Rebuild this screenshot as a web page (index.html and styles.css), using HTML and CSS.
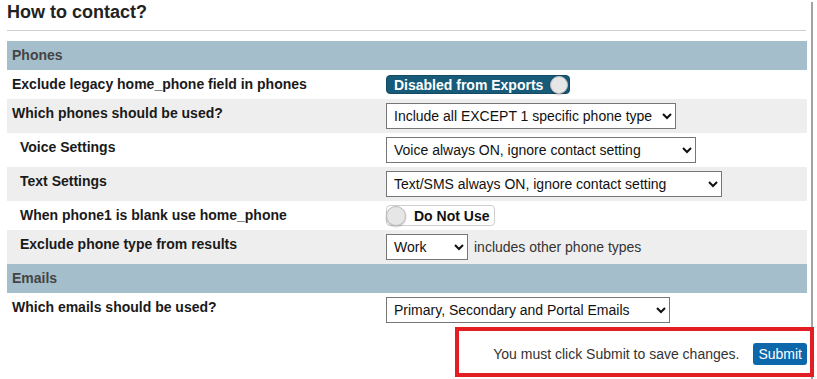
FILE: index.html
```html
<!DOCTYPE html>
<html lang="en">
<head>
  <meta charset="UTF-8" />
  <title>How to contact?</title>
  <link rel="stylesheet" href="styles.css">
</head>
<body>
  <div class="page">
    <h2 class="title">How to contact?</h2>
    <hr class="rule">

    <div class="section-head">Phones</div>
    <div class="row short">
      <div class="label">Exclude legacy home_phone field in phones</div>
      <div class="control">
        <span class="switch on">Disabled from Exports<span class="knob"></span></span>
      </div>
    </div>
    <div class="row alt">
      <div class="label">Which phones should be used?</div>
      <div class="control">
        <select class="w-phones">
          <option>Include all EXCEPT 1 specific phone type</option>
        </select>
      </div>
    </div>
    <div class="row">
      <div class="label sub">Voice Settings</div>
      <div class="control">
        <select class="w-voice">
          <option>Voice always ON, ignore contact setting</option>
        </select>
      </div>
    </div>
    <div class="row alt">
      <div class="label sub">Text Settings</div>
      <div class="control">
        <select class="w-text">
          <option>Text/SMS always ON, ignore contact setting</option>
        </select>
      </div>
    </div>
    <div class="row short">
      <div class="label sub">When phone1 is blank use home_phone</div>
      <div class="control">
        <span class="switch off"><span class="knob"></span>Do Not Use</span>
      </div>
    </div>
    <div class="row alt">
      <div class="label sub">Exclude phone type from results</div>
      <div class="control">
        <select class="w-type">
          <option>Work</option>
        </select>
        <span class="hint">includes other phone types</span>
      </div>
    </div>

    <div class="section-head">Emails</div>
    <div class="row">
      <div class="label">Which emails should be used?</div>
      <div class="control">
        <select class="w-emails">
          <option>Primary, Secondary and Portal Emails</option>
        </select>
      </div>
    </div>

    <div class="footer">
      <div class="notice">
        <span>You must click Submit to save changes.</span>
        <button class="submit">Submit</button>
      </div>
    </div>
  </div>
</body>
</html>
```

FILE: styles.css
```css
body {
  margin: 0;
  font-family: "Liberation Sans", Arial, sans-serif;
  color: #222;
  background: #fff;
  overflow: hidden;
}

.page {
  width: 800px;
  min-height: 379px;
  padding: 0 4px 0 7px;
  border-right: 2px solid #a3a3a3;
  box-sizing: content-box;
}

.title {
  margin: 2px 0 0;
  font-size: 18px;
  line-height: 21px;
  font-weight: bold;
  color: #222;
}

.rule {
  margin: 7px 1px 10px 0;
  border: none;
  border-top: 1px solid #cfcfcf;
  height: 0;
}

.section-head {
  height: 29px;
  line-height: 29px;
  padding-left: 5px;
  background: #a4bfcb;
  font-size: 14px;
  font-weight: bold;
  color: #444;
}

.row {
  display: grid;
  grid-template-columns: 379px 1fr;
  align-items: center;
  height: 34px;
}
.row.short { height: 29px; }
.row.alt { background: #eee; }

.label {
  align-self: start;
  padding: 6px 0 0 5px;
  line-height: 16px;
  font-size: 14px;
  font-weight: bold;
  color: #1a1a1a;
}
.label.sub { padding-left: 13px; }

.control {
  display: flex;
  align-items: center;
  gap: 6px;
}

select {
  height: 26px;
  font: 14px "Liberation Sans", Arial, sans-serif;
  color: #111;
  background: #fff;
  border: 1px solid #767676;
  border-radius: 0;
  padding: 0 3px;
}
.w-phones { width: 290px; }
.w-voice { width: 310px; }
.w-text { width: 336px; }
.w-type { width: 82px; }
.w-emails { width: 284px; }

.hint {
  font-size: 14px;
  color: #333;
}

.switch {
  display: inline-flex;
  align-items: center;
  box-sizing: border-box;
  border-radius: 4px;
  font-size: 14px;
  font-weight: bold;
}
.switch.on {
  height: 19px;
  padding: 0 1px 0 7px;
  gap: 7px;
  background: #175b78;
  color: #fff;
  border: 1px solid #124a63;
}
.switch.off {
  height: 21px;
  padding: 0 5px 0 0;
  gap: 8px;
  background: #fff;
  color: #111;
  border: 1px solid #cfcfcf;
}
.knob {
  width: 18px;
  height: 18px;
  border-radius: 50%;
  background: #e6e6e6;
  border: 1px solid #bdbdbd;
  box-sizing: border-box;
  box-shadow: 0 1px 2px rgba(0, 0, 0, 0.25);
}
.switch.off .knob {
  width: 20px;
  height: 20px;
  margin-left: -1px;
}

.footer {
  display: flex;
  justify-content: flex-end;
  margin-right: -7px;
  position: relative;
}

.notice {
  width: 359px;
  height: 50px;
  box-sizing: border-box;
  border: 4px solid #e21d24;
  display: flex;
  align-items: center;
  justify-content: flex-end;
  gap: 14px;
  padding: 3px 3px 0 0;
  font-size: 14px;
  color: #333;
  background: #fff;
}

.submit {
  height: 22px;
  padding: 0 5px;
  border: none;
  border-radius: 3px;
  background: #0c68aa;
  color: #fff;
  font: 14px "Liberation Sans", Arial, sans-serif;
}
```
